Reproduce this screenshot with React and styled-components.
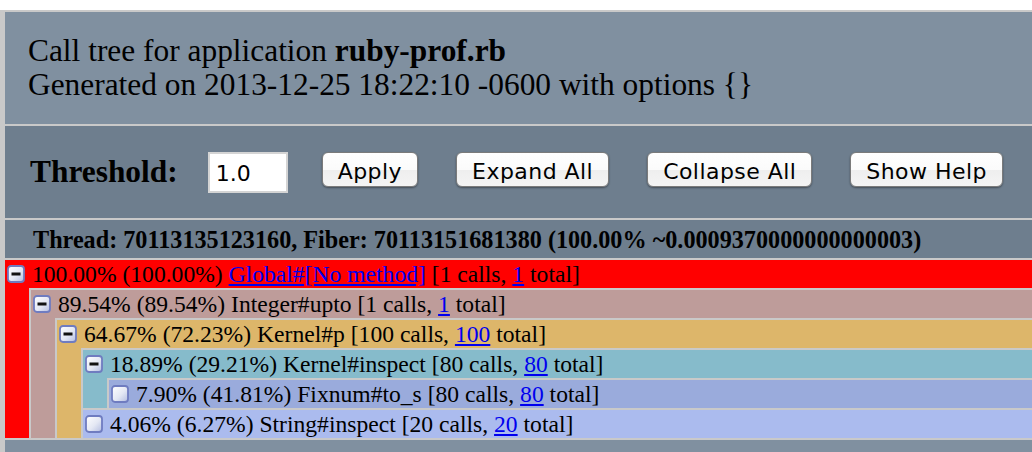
import React from 'react'
import styled, { createGlobalStyle } from 'styled-components'

const GlobalStyle = createGlobalStyle`
    html, body {
        margin: 0;
        padding: 0;
        background: #fff;
    }
    body {
        font-family: "Liberation Serif", "Times New Roman", serif;
        color: #000;
    }
`

const tree = {
    bg: '#ff0000', self: '100.00%', total: '100.00%', name: 'Global#[No method]', link: true, calls: 1, count: 1,
    children: [
        {
            bg: '#be9c9a', self: '89.54%', total: '89.54%', name: 'Integer#upto', calls: 1, count: 1,
            children: [
                {
                    bg: '#ddb66a', self: '64.67%', total: '72.23%', name: 'Kernel#p', calls: 100, count: 100,
                    children: [
                        {
                            bg: '#86bbcb', self: '18.89%', total: '29.21%', name: 'Kernel#inspect', calls: 80, count: 80,
                            children: [
                                { bg: '#9aabdc', self: '7.90%', total: '41.81%', name: 'Fixnum#to_s', calls: 80, count: 80 },
                            ],
                        },
                        { bg: '#abbbee', self: '4.06%', total: '6.27%', name: 'String#inspect', calls: 20, count: 20 },
                    ],
                },
            ],
        },
    ],
}

const Toggle = ({ open }) => (
    <ToggleIcon width="18" height="18" viewBox="0 0 18 18">
        <defs>
            <linearGradient id={open ? 'tgOpen' : 'tgLeaf'} x1="0" y1="0" x2="1" y2="1">
                <stop offset="0" stopColor="#ffffff" />
                <stop offset="0.55" stopColor="#e4e8f4" />
                <stop offset="1" stopColor="#b3bce0" />
            </linearGradient>
        </defs>
        <rect x="1" y="1" width="16" height="16" rx="3" fill={`url(#${open ? 'tgOpen' : 'tgLeaf'})`} stroke="#6f7cc0" strokeWidth="1.8" />
        {open && <rect x="4.5" y="7.5" width="9" height="3" fill="#111" />}
    </ToggleIcon>
)

const Node = ({ node, root }) => {
    const open = !!node.children
    return (
        <Item $bg={node.bg} $root={root}>
            <Line>
                <Toggle open={open} />
                <span>
                    {node.self} ({node.total}){' '}
                    {node.link ? <a href="#">{node.name}</a> : node.name}
                    {' '}[{node.calls} calls, <a href="#">{node.count}</a> total]
                </span>
            </Line>
            {open && (
                <Children>
                    {node.children.map((c) => <Node key={c.name} node={c} />)}
                </Children>
            )}
        </Item>
    )
}

const App = () => {
    return (
        <>
            <GlobalStyle />
            <Page>
                <Header>
                    <div>Call tree for application <b>ruby-prof.rb</b></div>
                    <div>Generated on 2013-12-25 18:22:10 -0600 with options {'{}'}</div>
                </Header>
                <Toolbar>
                    <Label>Threshold:</Label>
                    <Input defaultValue="1.0" />
                    <Button>Apply</Button>
                    <Button>Expand All</Button>
                    <Button>Collapse All</Button>
                    <Button>Show Help</Button>
                </Toolbar>
                <ThreadBar>
                    Thread: 70113135123160, Fiber: 70113151681380 (100.00% ~0.0009370000000000003)
                </ThreadBar>
                <Tree>
                    <Node node={tree} root />
                </Tree>
                <Footer />
            </Page>
        </>
    )
}

const Page = styled.div`
    margin-top: 10px;
    border-top: 2px solid #c9c9c9;
    border-left: 5px solid #c9c9c9;
    display: flex;
    flex-direction: column;
`

const Header = styled.div`
    background: #8090a0;
    padding: 22px 0 22px 23px;
    font-size: 31.4px;
    line-height: 34px;
    border-bottom: 2px solid #c9c9c9;
`

const Toolbar = styled.div`
    background: #6e7e8e;
    height: 94px;
    box-sizing: border-box;
    padding: 26px 0 0 25px;
    display: flex;
    align-items: flex-start;
    border-bottom: 2px solid #c9c9c9;
`

const Label = styled.span`
    font-weight: bold;
    font-size: 31.4px;
    line-height: 40px;
    margin-right: 30px;
    white-space: nowrap;
`

const Input = styled.input`
    flex: none;
    width: 80px;
    height: 41px;
    box-sizing: border-box;
    border: 2px solid #d4d4d4;
    background: #fff;
    padding: 2px 0 0 6px;
    margin: 0 34px 0 0;
    font-family: "DejaVu Sans", sans-serif;
    font-size: 22px;
    color: #000;
    outline: none;
`

const Button = styled.button`
    flex: none;
    white-space: nowrap;
    height: 35px;
    padding: 4px 15px 0;
    margin: 0 38px 0 0;
    font-family: "DejaVu Sans", sans-serif;
    font-size: 22px;
    letter-spacing: 0.45px;
    color: #000;
    background: linear-gradient(#ffffff 0%, #fbfbfb 50%, #eeeeee 51%, #f4f4f4 100%);
    border: 1px solid #7b7b7b;
    border-radius: 6px;
    box-shadow: 0 1px 2px rgba(0, 0, 0, 0.4);
    cursor: pointer;
`

const ThreadBar = styled.div`
    background: #6e7e8e;
    height: 38px;
    line-height: 40px;
    padding-left: 28px;
    font-weight: bold;
    font-size: 24.2px;
    white-space: nowrap;
    border-bottom: 2px solid #c9c9c9;
`

const Tree = styled.ul`
    list-style: none;
    margin: 0;
    padding: 0;
    border-bottom: 2px solid #c9c9c9;
`

const Children = styled.ul`
    list-style: none;
    margin: 0;
    padding: 0 0 0 24px;
`

const Item = styled.li`
    background: ${(p) => p.$bg};
    border-top: ${(p) => (p.$root ? 'none' : '2px solid #c9c9c9')};
    border-left: ${(p) => (p.$root ? 'none' : '2px solid #c9c9c9')};
`

const Line = styled.div`
    display: flex;
    align-items: center;
    gap: 7px;
    height: 28px;
    padding-left: 2px;
    font-size: 23.6px;
    line-height: 28px;
    white-space: nowrap;

    a {
        color: #0000ee;
        text-decoration: underline;
    }
`

const ToggleIcon = styled.svg`
    flex: none;
    display: block;
`

const Footer = styled.div`
    background: #8090a0;
    height: 20px;
`

export default App
